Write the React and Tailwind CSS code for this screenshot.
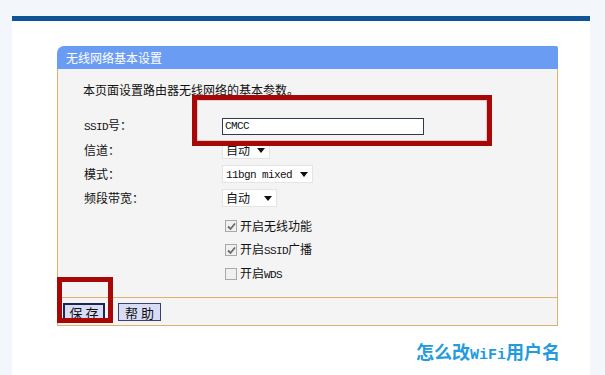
const mono = "font-['Liberation_Mono',monospace] text-[11px] tracking-[-0.6px]";

function Arrow() {
  return (
    <svg width="8" height="5" viewBox="0 0 8 5" className="shrink-0">
      <path d="M0 0 L8 0 L4 5 Z" fill="#111" />
    </svg>
  );
}

function Select({ w, children }) {
  return (
    <div className={`h-[18px] ${w} bg-white border border-[#e4e4e4] flex items-center justify-between pl-[3px] pr-[4px]`}>
      <span className="leading-none">{children}</span>
      <Arrow />
    </div>
  );
}

function Row({ label, children }) {
  return (
    <div className="flex items-center h-[24px]">
      <div className="w-[138px] leading-none">{label}</div>
      {children}
    </div>
  );
}

function Check({ checked, children }) {
  return (
    <div className="flex items-center h-[24px] pl-[141px]">
      <div className="w-[12px] h-[12px] border border-[#a9a9a9] bg-[#f0f0f0] flex items-center justify-center">
        {checked && (
          <svg width="9" height="9" viewBox="0 0 9 9">
            <path d="M1 4.5 L3.5 7 L8 1.5" fill="none" stroke="#6a6a6a" strokeWidth="1.8" />
          </svg>
        )}
      </div>
      <span className="ml-[3px] leading-none">{children}</span>
    </div>
  );
}

export default function App() {
  return (
    <div className="w-[605px] h-[375px] bg-[#f3f6fa] pt-[16px] pl-[12px] overflow-hidden font-['Noto_Sans_CJK_SC',sans-serif] text-[12px] text-[#111]">
      <div className="w-[578px] h-[359px] bg-white flex flex-col">
        <div className="h-[5px] bg-[#0e5597]" />
        <div className="relative ml-[45px] mt-[25px] w-[501px]">
          <div className="h-[23px] bg-[#6a9cf3] rounded-tl-[7px] rounded-tr-[2px] text-white pl-[9px] leading-[23px]">
            无线网络基本设置
          </div>
          <div className="border-x border-[#dfb070] bg-[#f4f4f4] pb-[11px]">
            <div className="pt-[13px] pl-[25px] leading-[16px]">本页面设置路由器无线网络的基本参数。</div>
            <div className="mt-[16px] pl-[26px]">
              <Row label={<><span className={mono}>SSID</span>号：</>}>
                <div className={`w-[202px] h-[17px] border border-[#2f3a4f] bg-white flex items-center pl-[2px] ${mono}`}>CMCC</div>
              </Row>
              <Row label="信道：">
                <Select w="w-[48px]">自动</Select>
              </Row>
              <Row label="模式：">
                <Select w="w-[91px]"><span className={mono}>11bgn mixed</span></Select>
              </Row>
              <Row label="频段带宽：">
                <Select w="w-[55px]">自动</Select>
              </Row>
              <div className="mt-[4px]">
                <Check checked>开启无线功能</Check>
                <Check checked>开启<span className={mono}>SSID</span>广播</Check>
                <Check>开启<span className={mono}>WDS</span></Check>
              </div>
            </div>
          </div>
          <div className="h-[29px] border border-[#dfb070] bg-[#f4f4f4] flex items-start pt-[5px] pl-[5px] gap-[13px]">
            <div className="w-[42px] h-[18px] border-2 border-[#1d2550] bg-[#d9dcf5] flex items-center justify-center text-[13px] leading-none">保&nbsp;存</div>
            <div className="w-[43px] h-[18px] border border-[#3a4170] bg-[#d9dcf5] flex items-center justify-center text-[13px] leading-none">帮&nbsp;助</div>
          </div>
          <div className="absolute left-[135px] top-[49px] w-[300px] h-[51px] border-[5px] border-[#a60808] shadow-[inset_0_0_0_1px_#f3c4c4]" />
          <div className="absolute left-0 top-[231px] w-[56px] h-[46px] border-[5px] border-[#a60808]" />
        </div>
        <div className="ml-[404px] mt-[14px] text-[18px] leading-[22px] font-bold text-[#239bdc] whitespace-nowrap">
          怎么改<span className="font-['Liberation_Mono',monospace] text-[15px]">WiFi</span>用户名
        </div>
      </div>
    </div>
  );
}
